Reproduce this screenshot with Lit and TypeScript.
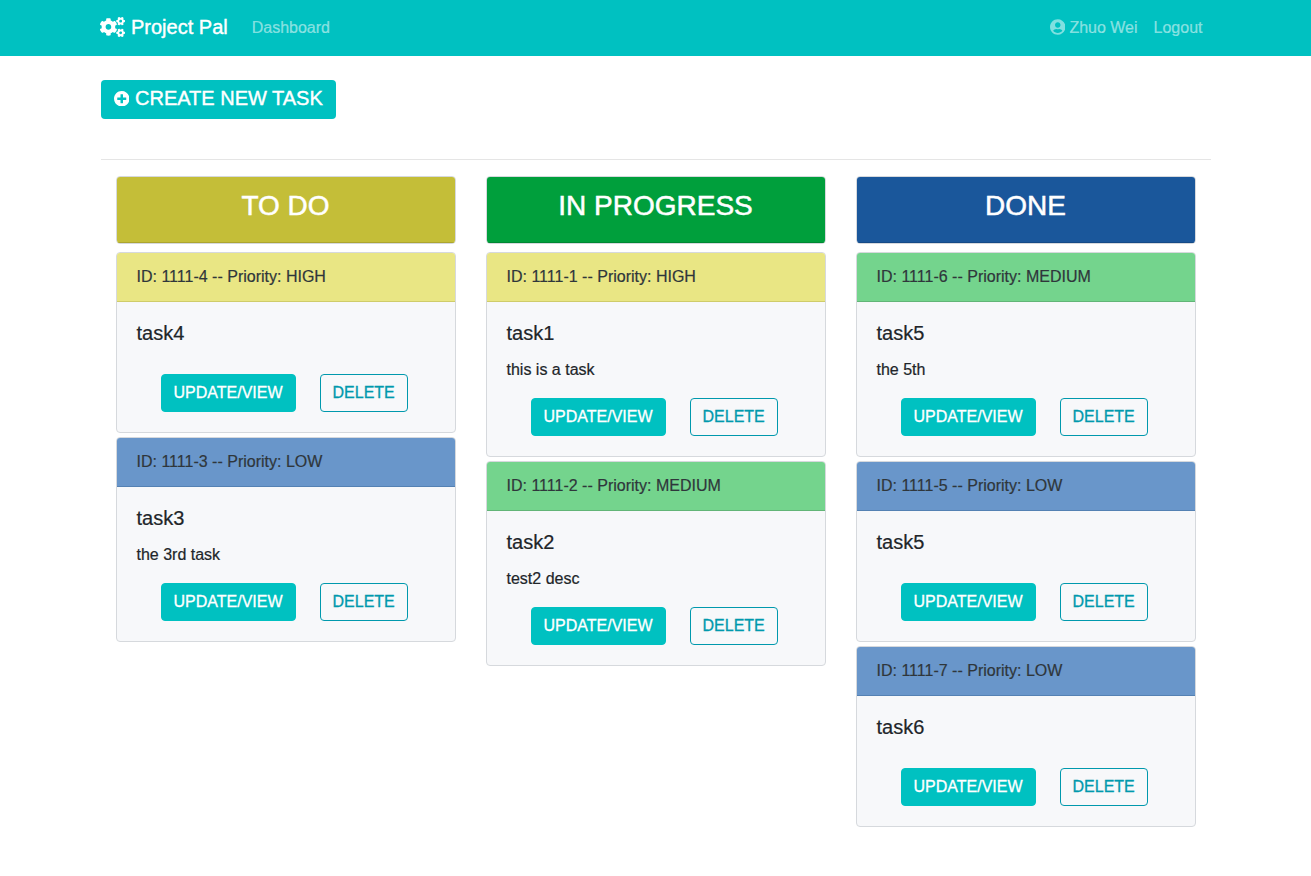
import { LitElement, html, css, svg } from "lit";
import { customElement, property } from "lit/decorators.js";

type Priority = "HIGH" | "MEDIUM" | "LOW";
interface Task {
  id: string;
  priority: Priority;
  title: string;
  desc: string;
}
interface Column {
  name: string;
  tone: string;
  tasks: Task[];
}

const SMALL_COG =
  "M512.1 191l-8.2 14.3c-3 5.3-9.4 7.5-15.1 5.4-11.8-4.4-22.6-10.7-32.1-18.6-4.6-3.8-5.8-10.5-2.8-15.7l8.2-14.3c-6.9-8-12.3-17.3-15.9-27.4h-16.5c-6 0-11.2-4.3-12.2-10.3-2-12-2.1-24.6 0-37.1 1-6 6.2-10.4 12.2-10.4h16.5c3.6-10.1 9-19.4 15.9-27.4l-8.2-14.3c-3-5.2-1.9-11.9 2.8-15.7 9.5-7.9 20.4-14.2 32.1-18.6 5.7-2.1 12.1.1 15.1 5.4l8.2 14.3c10.5-1.9 21.2-1.9 31.7 0L552 6.3c3-5.3 9.4-7.5 15.1-5.4 11.8 4.4 22.6 10.7 32.1 18.6 4.6 3.8 5.8 10.5 2.8 15.7l-8.2 14.3c6.9 8 12.3 17.3 15.9 27.4h16.5c6 0 11.2 4.3 12.2 10.3 2 12 2.1 24.6 0 37.1-1 6-6.2 10.4-12.2 10.4h-16.5c-3.6 10.1-9 19.4-15.9 27.4l8.2 14.3c3 5.2 1.9 11.9-2.8 15.7-9.5 7.9-20.4 14.2-32.1 18.6-5.7 2.1-12.1-.1-15.1-5.4l-8.2-14.3c-10.4 1.9-21.2 1.9-31.7 0zm-10.5-58.8c38.5 29.6 82.4-14.3 52.8-52.8-38.5-29.7-82.4 14.3-52.8 52.8z";
const BIG_COG =
  "M386.3 286.1l33.7 16.8c10.1 5.8 14.5 18.1 10.5 29.1-8.9 24.2-26.4 46.4-42.6 65.8-7.4 8.9-20.2 11.1-30.3 5.3l-29.1-16.8c-16 13.7-34.6 24.6-54.9 31.7v33.6c0 11.6-8.3 21.6-19.7 23.6-24.6 4.2-50.4 4.4-75.9 0-11.5-2-20-11.9-20-23.6V418c-20.3-7.2-38.9-18-54.9-31.7L74 403c-10 5.8-22.9 3.6-30.3-5.3-16.2-19.4-33.3-41.6-42.2-65.7-4-10.9.4-23.2 10.5-29.1l33.3-16.8c-3.9-20.9-3.9-42.4 0-63.4L12 205.8c-10.1-5.8-14.6-18.1-10.5-29 8.9-24.2 26-46.4 42.2-65.8 7.4-8.9 20.2-11.1 30.3-5.3l29.1 16.8c16-13.7 34.6-24.6 54.9-31.7V57.1c0-11.5 8.2-21.5 19.6-23.5 24.6-4.2 50.5-4.4 76-.1 11.5 2 20 11.9 20 23.6v33.6c20.3 7.2 38.9 18 54.9 31.7l29.1-16.8c10-5.8 22.9-3.6 30.3 5.3 16.2 19.4 33.2 41.6 42.1 65.8 4 10.9.1 23.2-10 29.1l-33.7 16.8c3.9 21 3.9 42.5 0 63.5zm-117.6 21.1c59.2-77-28.7-164.9-105.7-105.7-59.2 77 28.7 164.9 105.7 105.7z";
const PLUS =
  "M256 8C119 8 8 119 8 256s111 248 248 248 248-111 248-248S393 8 256 8zm144 276c0 6.6-5.4 12-12 12h-92v92c0 6.6-5.4 12-12 12h-56c-6.6 0-12-5.4-12-12v-92h-92c-6.6 0-12-5.4-12-12v-56c0-6.6 5.4-12 12-12h92v-92c0-6.6 5.4-12 12-12h56c6.6 0 12 5.4 12 12v92h92c6.6 0 12 5.4 12 12v56z";
const USER =
  "M248 8C111 8 0 119 0 256s111 248 248 248 248-111 248-248S385 8 248 8zm0 96c48.6 0 88 39.4 88 88s-39.4 88-88 88-88-39.4-88-88 39.4-88 88-88zm0 344c-58.7 0-111.3-26.6-146.5-68.2 18.8-35.4 55.6-59.8 98.5-59.8 2.4 0 4.8.4 7.1 1.1 13 4.2 26.6 6.9 40.9 6.9 14.3 0 28-2.7 40.9-6.9 2.3-.7 4.7-1.1 7.1-1.1 42.9 0 79.7 24.4 98.5 59.8C359.3 421.4 306.7 448 248 448z";

const cogs = svg`<path d=${BIG_COG}></path><path d=${SMALL_COG}></path><path transform="translate(0 299)" d=${SMALL_COG}></path>`;

const columns: Column[] = [
  {
    name: "TO DO",
    tone: "todo",
    tasks: [
      { id: "1111-4", priority: "HIGH", title: "task4", desc: "" },
      { id: "1111-3", priority: "LOW", title: "task3", desc: "the 3rd task" },
    ],
  },
  {
    name: "IN PROGRESS",
    tone: "progress",
    tasks: [
      { id: "1111-1", priority: "HIGH", title: "task1", desc: "this is a task" },
      { id: "1111-2", priority: "MEDIUM", title: "task2", desc: "test2 desc" },
    ],
  },
  {
    name: "DONE",
    tone: "done",
    tasks: [
      { id: "1111-6", priority: "MEDIUM", title: "task5", desc: "the 5th" },
      { id: "1111-5", priority: "LOW", title: "task5", desc: "" },
      { id: "1111-7", priority: "LOW", title: "task6", desc: "" },
    ],
  },
];

@customElement("task-card")
class TaskCard extends LitElement {
  @property({ attribute: false }) task!: Task;

  static styles = css`
    :host {
      display: block;
      margin-bottom: 4px;
    }
    .card {
      border: 1px solid #d6d9dd;
      border-radius: 4px;
      background: #f7f8fa;
      overflow: hidden;
    }
    .head {
      padding: 12px 20px;
      line-height: 24px;
      color: #2f363b;
      border-bottom: 1px solid;
    }
    .high { background: #e9e684; border-color: #cfcc6a; }
    .medium { background: #74d48d; border-color: #62b577; }
    .low { background: #6996ca; border-color: #5481b3; }
    .body {
      display: flex;
      flex-direction: column;
      padding: 19px 20px 20px;
    }
    .title {
      margin: 0 0 13px;
      font-size: 20px;
      font-weight: 400;
      line-height: 24px;
    }
    .desc {
      margin: 0 0 16px;
      line-height: 24px;
    }
    .actions {
      display: flex;
      gap: 24px;
      padding-left: 24px;
    }
    .btn {
      box-sizing: border-box;
      height: 38px;
      padding: 6px 12px;
      border: 1px solid #00c1c1;
      border-radius: 4px;
      font: inherit;
      line-height: 24px;
      white-space: nowrap;
      background: #00c1c1;
      color: #fff;
      -webkit-text-stroke: 0.3px;
    }
    .outline {
      background: transparent;
      border-color: #0099ad;
      color: #0099ad;
    }
  `;

  render() {
    const t = this.task;
    return html`<article class="card">
      <div class="head ${t.priority.toLowerCase()}">ID: ${t.id} -- Priority: ${t.priority}</div>
      <div class="body">
        <h5 class="title">${t.title}</h5>
        <p class="desc">${t.desc}</p>
        <div class="actions">
          <button class="btn">UPDATE/VIEW</button>
          <button class="btn outline">DELETE</button>
        </div>
      </div>
    </article>`;
  }
}

@customElement("app-root")
class AppRoot extends LitElement {
  static styles = css`
    :host {
      display: block;
      min-height: 100vh;
      background: #fff;
      color: #212529;
      font: 16px/24px "Liberation Sans", Arial, sans-serif;
      -webkit-text-stroke: 0.2px;
    }
    svg {
      fill: currentColor;
      flex: none;
    }
    .nav {
      background: #00c1c1;
    }
    .wrap {
      box-sizing: border-box;
      width: 1140px;
      margin: 0 auto;
      padding: 0 15px;
    }
    .bar {
      display: flex;
      align-items: center;
      height: 56px;
      padding-bottom: 1px;
      color: rgba(255, 255, 255, 0.5);
    }
    .brand {
      display: flex;
      align-items: center;
      gap: 6px;
      margin: 0 24px 0 -0.5px;
      padding-bottom: 2px;
      font-size: 20px;
      color: #fff;
      -webkit-text-stroke: 0.4px;
    }
    .right {
      display: flex;
      gap: 16px;
      margin-left: auto;
      padding-right: 8px;
    }
    .user {
      display: flex;
      align-items: center;
      gap: 4px;
    }
    .user svg {
      margin-bottom: 1px;
    }
    .create {
      display: flex;
      align-items: center;
      gap: 6px;
      box-sizing: border-box;
      height: 39px;
      margin-top: 24px;
      padding: 0 13px 2px;
      border: 0;
      border-radius: 4px;
      background: #00c1c1;
      color: #fff;
      font: inherit;
      font-size: 20px;
      line-height: 24px;
      white-space: nowrap;
      -webkit-text-stroke: 0.4px;
    }
    .label {
      padding-bottom: 2px;
    }
    .rule {
      height: 1px;
      margin: 40px 0 16px;
      background: #e5e5e5;
    }
    .board {
      display: grid;
      grid-template-columns: repeat(3, 1fr);
      gap: 30px;
      align-items: start;
      padding: 0 15px;
    }
    .heading {
      box-sizing: border-box;
      height: 68px;
      margin-bottom: 8px;
      border: 1px solid #d6d9dd;
      border-radius: 4px;
      overflow: hidden;
    }
    .heading h3 {
      box-sizing: border-box;
      height: 66px;
      margin: 0;
      padding-top: 12px;
      border-bottom: 1px solid;
      font-size: 28px;
      font-weight: 400;
      line-height: 34px;
      text-align: center;
      color: #fff;
      -webkit-text-stroke: 0.5px;
    }
    .heading .todo { background: #c4be38; border-color: #aca52f; }
    .heading .progress { background: #009f3c; border-color: #008833; }
    .heading .done { background: #1a579b; border-color: #154a86; }
  `;

  render() {
    return html`
      <nav class="nav">
        <div class="wrap bar">
          <a class="brand"><svg width="25" height="20" viewBox="0 0 640 512">${cogs}</svg>Project Pal</a>
          <a>Dashboard</a>
          <div class="right">
            <a class="user"><svg width="15.5" height="16" viewBox="0 0 496 512"><path d=${USER}></path></svg>Zhuo Wei</a>
            <a>Logout</a>
          </div>
        </div>
      </nav>
      <main class="wrap">
        <button class="create">
          <svg width="15.5" height="15.5" viewBox="8 8 496 496"><path d=${PLUS}></path></svg>
          <span class="label">CREATE NEW TASK</span>
        </button>
        <div class="rule"></div>
        <div class="board">
          ${columns.map(
            (c) => html`<section>
              <div class="heading"><h3 class=${c.tone}>${c.name}</h3></div>
              ${c.tasks.map((t) => html`<task-card .task=${t}></task-card>`)}
            </section>`
          )}
        </div>
      </main>
    `;
  }
}
